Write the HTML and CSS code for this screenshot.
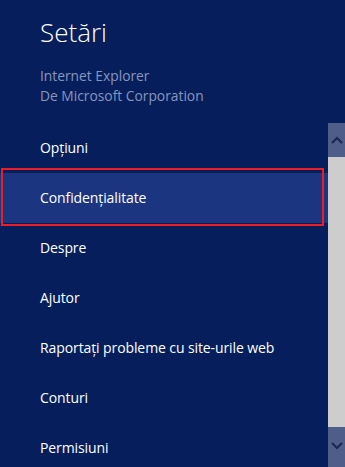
FILE: index.html
```html
<!DOCTYPE html>
<html>
    <head>
        <title>Setări</title>
        <link rel="stylesheet" href="styles.css">
        <meta charset="utf-8">
    </head>
    <body>
        <div class="header">
            <h1 class="title">Setări</h1>
            <p class="app">Internet Explorer<br>De Microsoft Corporation</p>
        </div>
        <div class="panel">
            <ul class="menu">
                <li class="item">Opțiuni</li>
                <li class="item selected">Confidențialitate</li>
                <li class="item">Despre</li>
                <li class="item">Ajutor</li>
                <li class="item">Raportați probleme cu site-urile web</li>
                <li class="item">Conturi</li>
                <li class="item">Permisiuni</li>
            </ul>
            <div class="scrollbar">
                <div class="arrow up">
                    <svg width="12" height="8" viewBox="0 0 12 8"><path d="M1 7 L6 2 L11 7" fill="none" stroke="#1d2850" stroke-width="2.2"/></svg>
                </div>
                <div class="thumb"></div>
                <div class="arrow down">
                    <svg width="12" height="8" viewBox="0 0 12 8"><path d="M1 1 L6 6 L11 1" fill="none" stroke="#1d2850" stroke-width="2.2"/></svg>
                </div>
            </div>
        </div>
    </body>
</html>
```

FILE: styles.css
```css
html, body{
    margin: 0;
    height: 467px;
    overflow: hidden;
}

body{
    background-color: #061f5c;
    color: #ffffff;
    font-family: "Open Sans", "Noto Sans", sans-serif;
}

.header{
    padding: 14px 0 0 40px;
    height: 109px;
    box-sizing: border-box;
}

.title{
    margin: 0;
    font-size: 26px;
    font-weight: 300;
    line-height: 36px;
}

.app{
    margin: 16px 0 0 0;
    font-size: 13.8px;
    line-height: 20px;
    color: #8796bd;
}

.panel{
    display: flex;
    margin-top: 14px;
}

.menu{
    flex: 1;
    list-style: none;
    margin: 0;
    padding: 0;
}

.item{
    position: relative;
    height: 50px;
    line-height: 50px;
    padding-left: 40px;
    font-size: 14px;
    letter-spacing: -0.1px;
}

.item.selected{
    background-color: #1b3580;
}

.item.selected::after{
    content: "";
    position: absolute;
    top: -5px;
    bottom: -3px;
    left: 1px;
    right: 4px;
    border: 2px solid #ee1c24;
}

.scrollbar{
    width: 17px;
    display: flex;
    flex-direction: column;
    background-color: #4f5d8b;
}

.arrow{
    display: flex;
    align-items: center;
    justify-content: center;
}

.arrow.up{
    height: 34px;
}

.arrow.down{
    height: 40px;
    align-items: flex-start;
    padding-top: 15px;
    box-sizing: border-box;
}

.thumb{
    height: 270px;
    background-color: #cdcdcd;
}
```
